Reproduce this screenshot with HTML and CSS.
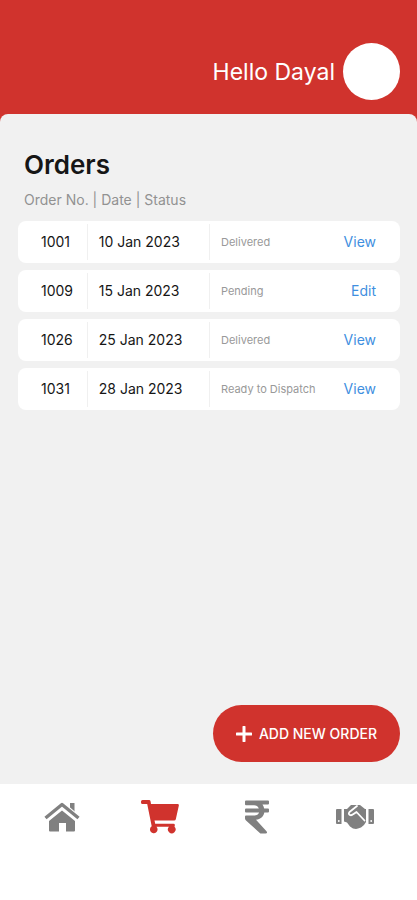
FILE: index.html
```html
<!DOCTYPE html>
<html lang="en">
<head>
<meta charset="utf-8">
<meta name="viewport" content="width=device-width, initial-scale=1">
<title>Orders</title>
<link rel="stylesheet" href="styles.css">
</head>
<body>
<header class="top">
  <span class="greeting">Hello Dayal</span>
  <span class="avatar"></span>
</header>
<main class="panel">
  <h1 class="title">Orders</h1>
  <table class="orders">
    <caption class="legend">Order No. | Date | Status</caption>
    <tbody>
      <tr><td class="number">1001</td><td class="date">10 Jan 2023</td><td class="status">Delivered</td><td class="action"><a href="#1001">View</a></td></tr>
      <tr><td class="number">1009</td><td class="date">15 Jan 2023</td><td class="status">Pending</td><td class="action"><a href="#1009">Edit</a></td></tr>
      <tr><td class="number">1026</td><td class="date">25 Jan 2023</td><td class="status">Delivered</td><td class="action"><a href="#1026">View</a></td></tr>
      <tr><td class="number">1031</td><td class="date">28 Jan 2023</td><td class="status">Ready to Dispatch</td><td class="action"><a href="#1031">View</a></td></tr>
    </tbody>
  </table>
  <button class="add" type="button">
    <svg width="16" height="16" viewBox="0 0 16 16" aria-hidden="true"><path d="M8 1v14M1 8h14" stroke="currentColor" stroke-width="3" stroke-linecap="round"/></svg>
    <span>ADD NEW ORDER</span>
  </button>
</main>
<nav class="tabs">
  <a href="#home" aria-label="Home">
    <svg width="36" height="30" viewBox="0 0 36 30"><path d="M26 1h4.500v11L26 8zM18 8.500 31 19v9.500q0 1-1 1h-8V21h-7v8.500H6q-1 0-1-1V19z"/><path d="M1 17 18 2.500 35 17" fill="none" stroke="#fff" stroke-width="6"/><path d="M1.500 16 18 2.500 34.500 16" fill="none" stroke="currentColor" stroke-width="3.400" stroke-linejoin="round"/></svg>
  </a>
  <a href="#orders" aria-label="Orders" class="current">
    <svg width="38" height="34" viewBox="0 0 38 34"><path d="M1.500 0H8q1.300 0 1.600 1.400L10 4h26.500q1.700 0 1.300 1.700l-3 13.500q-.3 1.300-1.600 1.300H13.500l.7 3.300h18.300q1.600 0 1.300 1.600l-.3 1.400a3.800 3.800 0 1 1-5.500 0H15.500a3.800 3.800 0 1 1-4.800-.5L6.200 4H1.500Q0 4 0 2.500v-1Q0 0 1.500 0z"/></svg>
  </a>
  <a href="#payments" aria-label="Payments">
    <svg width="24" height="34" viewBox="0 0 24 34"><path d="M1 .5h22q1 0 1 1v2q0 1-1 1h-5.500q1.300 1.800 1.700 4H23q1 0 1 1v2q0 1-1 1h-3.700c-.7 4-3.800 6.700-8.300 7.200l10.500 11.500q1.500 2.300-1 2.300h-4.400q-.8 0-1.300-.6L1 20.500Q0 19.500 0 18.500v-2q0-1 1-1h8.300q3.700 0 4.800-3H1q-1 0-1-1v-2q0-1 1-1h12.800q-1.300-3.200-4.800-3.200H1q-1 0-1-1V1.500q0-1 1-1z"/></svg>
  </a>
  <a href="#partners" aria-label="Partners">
    <svg width="38" height="26" viewBox="0 0 38 26"><path d="M1 5h4.500v15H1q-1 0-1-1V6q0-1 1-1zM32.500 5H37q1 0 1 1v13q0 1-1 1h-4.500zM8 5h3l4-4h9l5 4h1v13l-2 3-3 2.500-3 1-2 .5-3-.500-3-2-3-4-3-1z"/><path d="m21 2-7.500 6q-1.500 1.800.3 3 1.800.8 3.400-.8L20.500 8l8 8.500" fill="none" stroke="#fff" stroke-width="1.800" stroke-linejoin="round" stroke-linecap="round"/><circle cx="2.800" cy="17" r=".9" fill="#fff"/><circle cx="35.200" cy="17" r=".9" fill="#fff"/></svg>
  </a>
</nav>
</body>
</html>
```
FILE: styles.css
```css
* { box-sizing: border-box; }

body {
  margin: 0;
  min-height: 100vh;
  display: flex;
  flex-direction: column;
  background: #d0332d;
  font-family: Inter, "Liberation Sans", sans-serif;
  color: #161616;
}

.top {
  display: flex;
  align-items: center;
  justify-content: flex-end;
  gap: 8px;
  padding: 43px 17px 14px;
}

.greeting {
  font-size: 23px;
  line-height: 28px;
  color: #fff;
}

.avatar {
  width: 57px;
  height: 57px;
  border-radius: 50%;
  background: #fff;
}

.panel {
  flex: 1;
  display: flex;
  flex-direction: column;
  padding: 34px 17px 22px 18px;
  border-radius: 8px 8px 0 0;
  background: #f1f1f1;
}

.title {
  margin: 0 6px;
  font-size: 26px;
  line-height: 34px;
  font-weight: 600;
}

.orders {
  width: 100%;
  border-collapse: separate;
  border-spacing: 0 7px;
  table-layout: fixed;
  font-size: 14px;
  line-height: 20px;
}

.legend {
  padding: 8px 6px 4px;
  text-align: left;
  color: #929292;
}

.orders td {
  height: 42px;
  padding: 0;
  background: #fff;
  white-space: nowrap;
}

.orders .number {
  width: 18%;
  padding-left: 23px;
  border-radius: 8px 0 0 8px;
}

.orders .date,
.orders .status {
  padding-left: 12px;
  background: linear-gradient(#f0f0f0, #f0f0f0) left center / 1px 36px no-repeat #fff;
}

.orders .date { width: 32%; }

.orders .status {
  font-size: 11px;
  color: #999;
}

.orders .action {
  width: 19%;
  padding-right: 24px;
  text-align: right;
  border-radius: 0 8px 8px 0;
}

.action a {
  color: #3f8fe0;
  text-decoration: none;
}

.add {
  display: flex;
  align-items: center;
  gap: 7px;
  height: 57px;
  margin-top: auto;
  align-self: flex-end;
  padding: 0 23px;
  border: 0;
  border-radius: 29px;
  background: #d0332d;
  color: #fff;
  font-family: inherit;
  font-size: 14px;
  font-weight: 500;
}

.tabs {
  display: grid;
  grid-template-columns: repeat(4, 1fr);
  height: 116px;
  padding: 0 13px;
  background: #fff;
}

.tabs a {
  display: flex;
  align-items: center;
  justify-content: center;
  height: 65px;
  color: #808080;
}

.tabs .current { color: #d0332d; }

.tabs svg { fill: currentColor; }
```
